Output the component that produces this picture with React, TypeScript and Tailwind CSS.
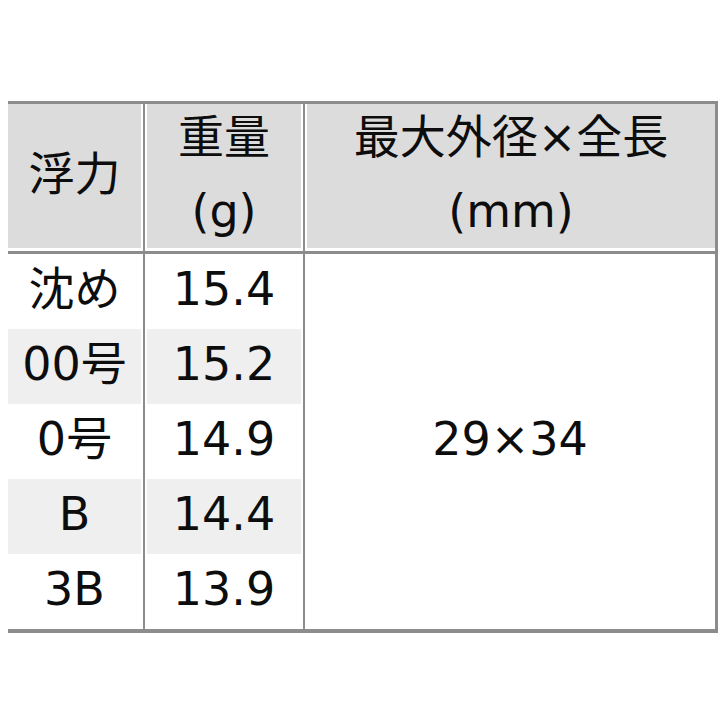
const rows = [
  { name: "沈め", weight: "15.4" },
  { name: "00号", weight: "15.2" },
  { name: "0号", weight: "14.9" },
  { name: "B", weight: "14.4" },
  { name: "3B", weight: "13.9" },
];

const font = {
  fontFamily: '"DejaVu Sans", "Noto Sans CJK JP", sans-serif',
};

const App = () => {
  return (
    <div className="w-[720px] h-[720px] bg-white pt-[101px] text-[46px] text-[#0d0d0d]" style={font}>
      <div className="ml-[8px] w-[710px] border-t-[3px] border-b-[4px] border-r-[3px] border-[#8c8c8c] grid grid-cols-[135px_160px_1fr] grid-rows-[150px_repeat(5,75px)]">
        {/* 헤더 */}
        <div className="pr-[2px] pb-[3px] border-b-[3px] border-[#8c8c8c]">
          <div className="h-full bg-[#dcdcdc] flex items-center justify-center pb-1">浮力</div>
        </div>
        <div className="border-l-2 border-b-[3px] border-[#8c8c8c] px-[2px] pb-[3px]">
          <div className="h-full bg-[#dcdcdc] flex flex-col items-center justify-center leading-[74px] pb-1">
            <span>重量</span>
            <span>(g)</span>
          </div>
        </div>
        <div className="border-l-2 border-b-[3px] border-[#8c8c8c] pl-[2px] pb-[3px]">
          <div className="h-full bg-[#dcdcdc] flex flex-col items-center justify-center leading-[74px] pb-1">
            <span>最大外径×全長</span>
            <span>(mm)</span>
          </div>
        </div>

        {/* 본문 */}
        {rows.map((row, i) => (
          <div key={row.name} className="contents">
            <div className="pr-[2px]">
              <div className={`h-full flex items-center justify-center pb-1 ${i % 2 === 1 ? "bg-[#efefef]" : "bg-white"}`}>
                {row.name}
              </div>
            </div>
            <div className="border-l-2 border-[#8c8c8c] px-[2px]">
              <div className={`h-full flex items-center justify-center pb-1 ${i % 2 === 1 ? "bg-[#efefef]" : "bg-white"}`}>
                {row.weight}
              </div>
            </div>
            {i === 0 && (
              <div className="row-span-5 border-l-2 border-[#8c8c8c] flex items-center justify-center pb-1">
                29×34
              </div>
            )}
          </div>
        ))}
      </div>
    </div>
  );
};

export default App;
